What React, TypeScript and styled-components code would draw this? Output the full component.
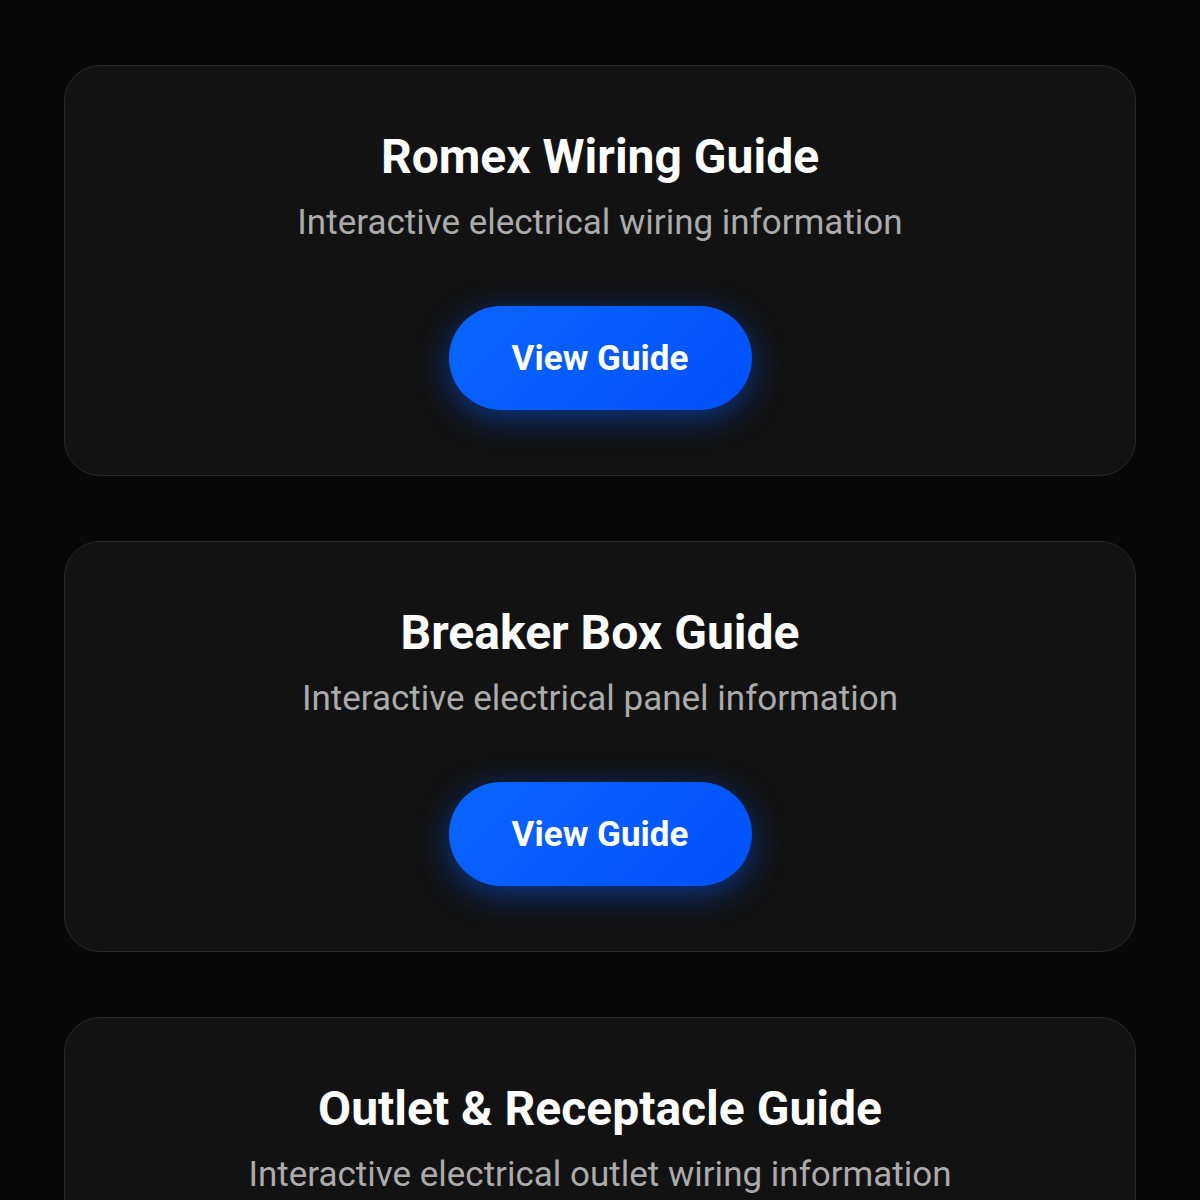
import styled, { createGlobalStyle } from "styled-components";

const GlobalStyle = createGlobalStyle`
  html, body {
    margin: 0;
    padding: 0;
    background: #080808;
  }

  body {
    font-family: Roboto, "Noto Sans", "Liberation Sans", sans-serif;
    color: #ffffff;
    -webkit-font-smoothing: antialiased;
  }
`;

const Page = styled.main`
  display: flex;
  flex-direction: column;
  gap: 65px;
  padding: 65px 64px;
  min-height: 1200px;
  box-sizing: border-box;
`;

const Card = styled.section`
  display: flex;
  flex-direction: column;
  align-items: center;
  padding: 64px 32px 65px;
  background: #121212;
  border: 1px solid #292929;
  border-radius: 36px;
  text-align: center;
`;

const Title = styled.h2`
  margin: 0;
  font-size: 48px;
  font-weight: 700;
  line-height: 54px;
  color: #ffffff;
`;

const Subtitle = styled.p`
  margin: 18px 0 0;
  font-size: 35px;
  font-weight: 400;
  line-height: 42px;
  color: #ababab;
`;

const GuideButton = styled.button`
  margin-top: 62px;
  width: 303px;
  height: 104px;
  border: none;
  border-radius: 52px;
  background: linear-gradient(135deg, #0a66ff 0%, #0050fa 100%);
  box-shadow: 0 8px 32px rgba(0, 90, 255, 0.5);
  color: #ffffff;
  font-family: inherit;
  font-size: 35px;
  font-weight: 700;
  cursor: pointer;
`;

const guides = [
  {
    title: "Romex Wiring Guide",
    subtitle: "Interactive electrical wiring information",
  },
  {
    title: "Breaker Box Guide",
    subtitle: "Interactive electrical panel information",
  },
  {
    title: "Outlet & Receptacle Guide",
    subtitle: "Interactive electrical outlet wiring information",
  },
];

export default function App() {
  return (
    <>
      <GlobalStyle />
      <Page>
        {guides.map((guide) => (
          <Card key={guide.title}>
            <Title>{guide.title}</Title>
            <Subtitle>{guide.subtitle}</Subtitle>
            <GuideButton type="button">View Guide</GuideButton>
          </Card>
        ))}
      </Page>
    </>
  );
}
